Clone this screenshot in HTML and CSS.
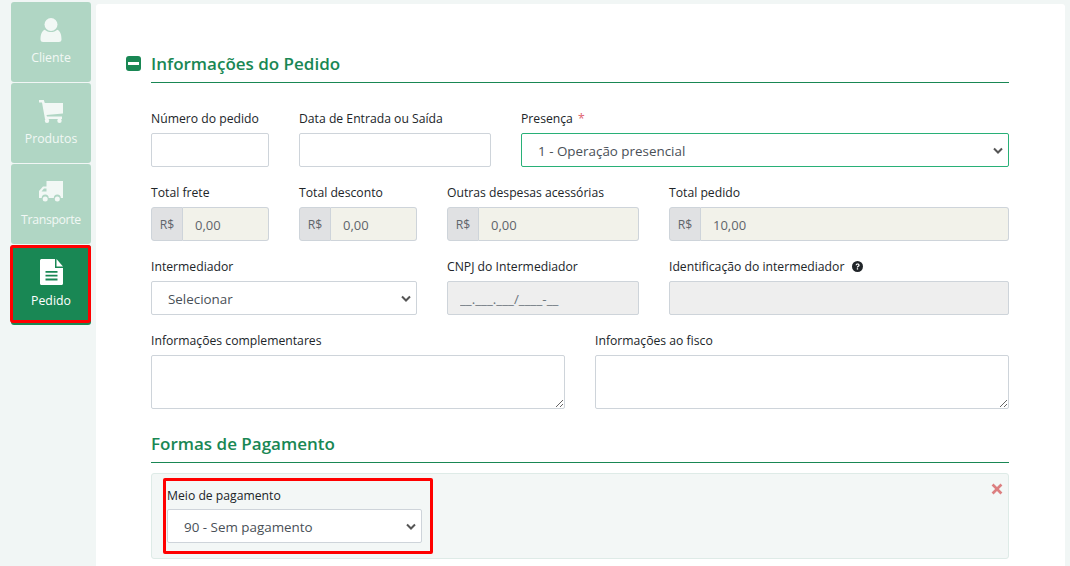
FILE: index.html
```html
<!DOCTYPE html>
<html lang="pt-BR">
<head>
<meta charset="utf-8">
<title>Pedido</title>
<link rel="stylesheet" href="styles.css">
</head>
<body>
<div class="app">
  <nav class="tabs">
    <a class="tab">
      <svg class="tab-icon" viewBox="0 0 24 24"><circle cx="12" cy="6.500" r="6.500"/><path d="M4 24c-1.300 0-2.500-.8-2.500-2.500 0-4.500 1-8.500 4.300-9.800 1.600 1.400 3.700 2.300 6.200 2.300s4.600-.9 6.200-2.300c3.300 1.300 4.300 5.300 4.300 9.800 0 1.700-1.200 2.500-2.500 2.500z"/></svg>
      <span>Cliente</span>
    </a>
    <a class="tab">
      <svg class="tab-icon" viewBox="0 0 24 24"><path d="M0 1h4.800l1 3H24v10.500L7.500 16l.5 1.500h15V20H6L3 3.500H0z"/><circle cx="8" cy="21.800" r="2.200"/><circle cx="20.500" cy="21.800" r="2.200"/></svg>
      <span>Produtos</span>
    </a>
    <a class="tab">
      <svg class="tab-icon" viewBox="0 0 24 24"><path d="M7.500 1H24v17h-2.200a3.500 3.500 0 0 0-7 0H9.700a3.500 3.500 0 0 0-7 0H0v-7l4-4.500h3.500zM5 8.500 2.500 11.500h5v-3z" fill-rule="evenodd"/><circle cx="6.200" cy="19" r="2.500"/><circle cx="18.300" cy="19" r="2.500"/></svg>
      <span class="tab-tight">Transporte</span>
    </a>
    <a class="tab tab-active">
      <svg class="tab-icon tab-icon-tall" viewBox="0 0 23 26"><path d="M2 0h13v9h8v15.500c0 .9-.6 1.500-1.500 1.500h-20C.6 26 0 25.400 0 24.500V1.500C0 .6.600 0 2 0zM5.500 12v1.800h12V12zm0 3.800v1.800h12v-1.800zm0 3.800v1.800h12v-1.800z" fill-rule="evenodd"/><path d="M16.500 0 23 7.500h-6.500z"/></svg>
      <span>Pedido</span>
    </a>
  </nav>
  <main class="card">
    <header class="section-head">
      <span class="toggle"><span class="toggle-bar"></span></span>
      <h2 class="title">Informações do Pedido</h2>
    </header>
    <div class="form">
      <div class="row">
        <div class="field s2"><label>Número do pedido</label><input class="control" type="text"></div>
        <div class="field s3"><label>Data de Entrada ou Saída</label><input class="control" type="text"></div>
        <div class="field s7"><label>Presença <span class="req">*</span></label>
          <select class="control select valid"><option>1 - Operação presencial</option></select></div>
      </div>
      <div class="row">
        <div class="field s2"><label>Total frete</label><div class="money"><span class="addon">R$</span><input class="amount" value="0,00" readonly></div></div>
        <div class="field s2"><label>Total desconto</label><div class="money"><span class="addon">R$</span><input class="amount" value="0,00" readonly></div></div>
        <div class="field s3"><label>Outras despesas acessórias</label><div class="money"><span class="addon">R$</span><input class="amount" value="0,00" readonly></div></div>
        <div class="field s5"><label>Total pedido</label><div class="money"><span class="addon">R$</span><input class="amount" value="10,00" readonly></div></div>
      </div>
      <div class="row">
        <div class="field s4"><label>Intermediador</label>
          <select class="control select"><option>Selecionar</option></select></div>
        <div class="field s3"><label>CNPJ do Intermediador</label><input class="control disabled" value="__.___.___/____-__" readonly></div>
        <div class="field s5"><label>Identificação do intermediador<svg class="help" viewBox="0 0 16 16"><circle cx="8" cy="8" r="8" fill="#212529"/><path d="M5.200 6.100C5.300 4.500 6.500 3.500 8.200 3.500c1.600 0 2.900 1 2.900 2.500 0 1.200-.7 1.800-1.500 2.300-.6.400-.8.600-.8 1.200H7c0-1.200.4-1.800 1.200-2.300.6-.4 1-.7 1-1.200 0-.5-.4-.9-1-.9-.7 0-1.100.4-1.200 1z" fill="#fff"/><rect x="7" y="10.500" width="1.900" height="1.900" fill="#fff"/></svg></label>
          <input class="control disabled" readonly></div>
      </div>
      <div class="row">
        <div class="field s6"><label>Informações complementares</label><textarea class="control area"></textarea></div>
        <div class="field s6"><label>Informações ao fisco</label><textarea class="control area"></textarea></div>
      </div>
      <h2 class="title sub">Formas de Pagamento</h2>
      <div class="pay-box">
        <div class="pay-mark">
          <label>Meio de pagamento</label>
          <select class="control select pay-select"><option>90 - Sem pagamento</option></select>
        </div>
        <svg class="remove" viewBox="0 0 12 12"><path d="M2.500.6 6 4.100 9.500.6l1.900 1.900L7.900 6l3.500 3.500-1.900 1.900L6 7.900l-3.500 3.500L.6 9.500 4.100 6 .6 2.500z"/></svg>
      </div>
    </div>
  </main>
</div>
</body>
</html>
```
FILE: styles.css
```css
* { box-sizing: border-box; }
html, body { height: 100%; }
body {
  margin: 0;
  overflow: hidden;
  background: #f1f6f5;
  color: #212529;
  font-family: "Open Sans", "Liberation Sans", sans-serif;
  font-size: 12.2px;
}
.app { display: flex; height: 566px; overflow: hidden; }
.tabs {
  flex: none;
  width: 96px;
  padding: 2px 5px 0 11px;
  display: flex;
  flex-direction: column;
  gap: 1px;
}
.tab {
  position: relative;
  height: 80px;
  border-radius: 3px;
  background: #b0d6c4;
  color: #f2f8f5;
  display: flex;
  flex-direction: column;
  align-items: center;
  padding-top: 16px;
  font-size: 12.300px;
}
.tab span { margin-top: 8px; line-height: 16px; }
.tab .tab-tight { letter-spacing: -0.35px; }
.tab-icon { width: 24px; height: 24px; fill: currentColor; display: block; }
.tab-icon-tall { width: 23px; height: 26px; margin-top: -2px; }
.tab-active { background: #198754; color: #fff; }
.tab-active::after {
  content: "";
  position: absolute;
  top: 0;
  left: -1px;
  right: 0;
  bottom: 2px;
  border: 3px solid #f00;
  border-radius: 3px;
}
.card {
  flex: none;
  width: 969px;
  margin-top: 4px;
  height: 600px;
  background: #fff;
  border-radius: 3px 3px 0 0;
  padding: 46px 56px 0 30px;
}
.section-head { display: flex; align-items: center; gap: 10px; height: 26px; }
.toggle {
  width: 15px;
  height: 15px;
  border-radius: 3px;
  background: #198754;
  display: flex;
  align-items: center;
  justify-content: center;
}
.toggle-bar { width: 11px; height: 3px; background: #fff; }
.title { margin: 0; font-size: 17px; font-weight: 600; height: 26px; line-height: 28px; color: #198754; flex: 1; }
.form { margin-left: 25px; border-top: 1px solid #198754; margin-top: 6px; padding-top: 27px; }
.row {
  display: grid;
  grid-template-columns: repeat(12, 44px);
  column-gap: 30px;
  margin-bottom: 17px;
}
.s2 { grid-column: span 2; }
.s3 { grid-column: span 3; }
.s4 { grid-column: span 4; }
.s5 { grid-column: span 5; }
.s6 { grid-column: span 6; }
.s7 { grid-column: span 7; }
label { display: block; height: 17px; line-height: 18px; margin-bottom: 6px; white-space: nowrap; }
.req { color: #e0636f; margin-left: 2px; }
.control {
  display: block;
  width: 100%;
  height: 34px;
  padding: 2px 12px 0;
  border: 1px solid #ced4da;
  border-radius: 2px;
  background: #fff;
  color: #495057;
  font: 13px "Open Sans", "Liberation Sans", sans-serif;
  outline: none;
}
.select {
  appearance: none;
  padding-left: 16px;
  font-size: 13.400px;
  background-image: url("data:image/svg+xml,%3Csvg xmlns='http://www.w3.org/2000/svg' viewBox='0 0 10 7'%3E%3Cpath d='M1 1.500 5 5.500 9 1.500' fill='none' stroke='%23555' stroke-width='2'/%3E%3C/svg%3E");
  background-repeat: no-repeat;
  background-position: right 5px center;
  background-size: 10px 7px;
}
.valid { border-color: #28b077; }
.disabled { background: #eeeeee; color: #6c757d; font-size: 13.400px; }
.area { height: 54px; resize: both; }
.money { display: flex; height: 34px; }
.addon {
  flex: none;
  width: 32px;
  display: flex;
  align-items: center;
  justify-content: center;
  background: #e0e1e3;
  border: 1px solid #ced4da;
  border-radius: 3px 0 0 3px;
  color: #5f656b;
}
.amount {
  flex: 1;
  min-width: 0;
  border: 1px solid #ced4da;
  border-left: 0;
  border-radius: 0 3px 3px 0;
  background: #f2f2ea;
  color: #5f656b;
  padding: 2px 12px 0;
  font: 13px "Open Sans", "Liberation Sans", sans-serif;
  outline: none;
}
.help { width: 11px; height: 11px; margin-left: 8px; vertical-align: -1px; }
.sub { border-bottom: 1px solid #198754; height: 36px; line-height: 34px; margin-top: 18px; }
.pay-box {
  position: relative;
  display: flex;
  height: 86px;
  margin-top: 10px;
  padding: 4px 11px;
  background: #f3f7f6;
  border: 1px solid #deebe7;
  border-radius: 3px;
}
.pay-mark {
  width: 270px;
  height: 76px;
  border: 3px solid #f00;
  border-radius: 2px;
  padding: 6px 1px 0;
}
.pay-mark label { margin-bottom: 5px; }
.pay-select { width: 255px; }
.remove { position: absolute; top: 9px; right: 5px; width: 12px; height: 12px; fill: #dc7f80; }
```
